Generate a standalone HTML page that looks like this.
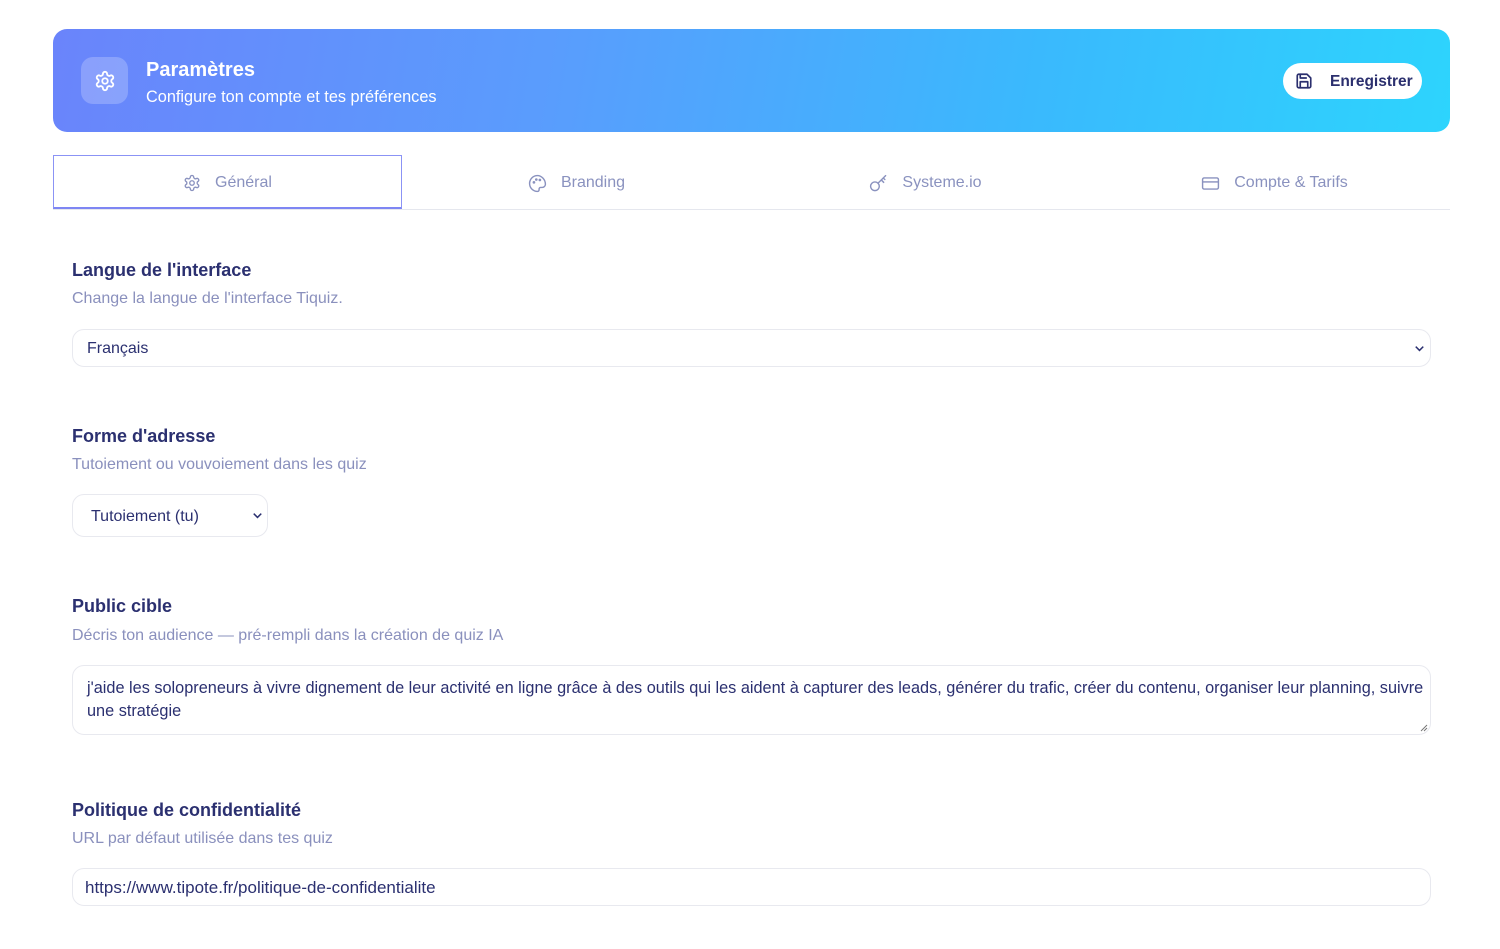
<!DOCTYPE html>
<html><head><meta charset="utf-8">
<style>
*{box-sizing:border-box;margin:0;padding:0}
body{width:1500px;height:949px;background:#fff;font-family:"Liberation Sans",sans-serif;position:relative;overflow:hidden;color:#2b3070}
.hdr{position:absolute;left:53px;top:29px;width:1397px;height:103px;border-radius:14px;background:linear-gradient(100deg,#6a84fb 0%,#5a9cfd 35%,#3ab9fd 70%,#2dd4fd 100%)}
.ic{position:absolute;left:28px;top:28px;width:47px;height:47px;border-radius:12px;background:rgba(255,255,255,.22);display:flex;align-items:center;justify-content:center}
.t1{position:absolute;left:93px;top:30px;color:#fff;font-weight:bold;font-size:20px}
.t2{position:absolute;left:93px;top:59px;color:#fff;font-size:16.3px}
.btn{position:absolute;left:1230px;top:34px;width:139px;height:36px;border-radius:18px;background:#fff;color:#2b2f6e;font-size:15.5px;font-weight:bold}
.btn svg{position:absolute;left:12px;top:9px}
.btn span{position:absolute;left:47px;top:10px}
.tabs{position:absolute;left:53px;top:155px;width:1397px;height:55px;border-bottom:1px solid #e5e7ee}
.tab{position:absolute;top:0;width:349px;height:54px;display:flex;align-items:center;justify-content:center;gap:14px;color:#8a92bf;font-size:16px;padding-top:2px}
.tab.a{border:1px solid #8b93f5;border-bottom:2px solid #7e86f3;height:54px}
.lbl{position:absolute;left:72px;font-size:18px;font-weight:bold;color:#2b3070}
.sub{position:absolute;left:72px;font-size:16px;color:#8a90bd}
.box{position:absolute;left:72px;width:1359px;border:1px solid #e8e9ef;border-radius:12px;font-size:16px;color:#2b3070}
</style></head><body>
<div class="hdr">
 <div class="ic"><svg width="22" height="22" viewBox="0 0 24 24" fill="none" stroke="#fff" stroke-width="2" stroke-linecap="round" stroke-linejoin="round"><path d="M12.22 2h-.44a2 2 0 0 0-2 2v.18a2 2 0 0 1-1 1.73l-.43.25a2 2 0 0 1-2 0l-.15-.08a2 2 0 0 0-2.73.73l-.22.38a2 2 0 0 0 .73 2.73l.15.1a2 2 0 0 1 1 1.72v.51a2 2 0 0 1-1 1.74l-.15.09a2 2 0 0 0-.73 2.73l.22.38a2 2 0 0 0 2.730.73l.15-.08a2 2 0 0 1 2 0l.43.25a2 2 0 0 1 1 1.73V20a2 2 0 0 0 2 2h.44a2 2 0 0 0 2-2v-.18a2 2 0 0 1 1-1.73l.43-.25a2 2 0 0 1 2 0l.15.08a2 2 0 0 0 2.73-.73l.22-.39a2 2 0 0 0-.73-2.73l-.15-.08a2 2 0 0 1-1-1.74v-.5a2 2 0 0 1 1-1.74l.15-.09a2 2 0 0 0 .73-2.73l-.22-.38a2 2 0 0 0-2.73-.73l-.15.08a2 2 0 0 1-2 0l-.43-.25a2 2 0 0 1-1-1.73V4a2 2 0 0 0-2-2z"/><circle cx="12" cy="12" r="3"/></svg></div>
 <div class="t1">Paramètres</div>
 <div class="t2">Configure ton compte et tes préférences</div>
 <div class="btn"><svg width="18" height="18" viewBox="0 0 24 24" fill="none" stroke="#2b2f6e" stroke-width="2.2" stroke-linecap="round" stroke-linejoin="round"><path d="M19 21H5a2 2 0 0 1-2-2V5a2 2 0 0 1 2-2h11l5 5v11a2 2 0 0 1-2 2z"/><path d="M17 21v-8H7v8"/><path d="M7 3v5h8"/></svg><span>Enregistrer</span></div>
</div>
<div class="tabs">
 <div class="tab a" style="left:0"><svg width="18" height="18" viewBox="0 0 24 24" fill="none" stroke="#8a92bf" stroke-width="1.8"><path d="M12.22 2h-.44a2 2 0 0 0-2 2v.18a2 2 0 0 1-1 1.73l-.43.25a2 2 0 0 1-2 0l-.15-.08a2 2 0 0 0-2.73.73l-.22.38a2 2 0 0 0 .73 2.73l.15.1a2 2 0 0 1 1 1.72v.51a2 2 0 0 1-1 1.74l-.15.09a2 2 0 0 0-.73 2.73l.22.38a2 2 0 0 0 2.73.73l.15-.08a2 2 0 0 1 2 0l.43.25a2 2 0 0 1 1 1.73V20a2 2 0 0 0 2 2h.44a2 2 0 0 0 2-2v-.18a2 2 0 0 1 1-1.73l.43-.25a2 2 0 0 1 2 0l.15.08a2 2 0 0 0 2.73-.73l.22-.39a2 2 0 0 0-.73-2.73l-.15-.08a2 2 0 0 1-1-1.74v-.5a2 2 0 0 1 1-1.74l.15-.09a2 2 0 0 0 .73-2.73l-.22-.38a2 2 0 0 0-2.73-.73l-.15.08a2 2 0 0 1-2 0l-.43-.25a2 2 0 0 1-1-1.73V4a2 2 0 0 0-2-2z"/><circle cx="12" cy="12" r="3"/></svg>Général</div>
 <div class="tab" style="left:349px"><svg width="19" height="19" viewBox="0 0 24 24" fill="none" stroke="#8a92bf" stroke-width="1.8"><path d="M12 2a10 10 0 0 0 0 20 2 2 0 0 0 2-2v-1a2 2 0 0 1 2-2h2a4 4 0 0 0 4-4c0-6-5-11-10-11z"/><circle cx="7.5" cy="10.5" r=".8" fill="#8a92bf"/><circle cx="10.5" cy="7" r=".8" fill="#8a92bf"/><circle cx="15" cy="7.5" r=".8" fill="#8a92bf"/></svg>Branding</div>
 <div class="tab" style="left:698px"><svg width="19" height="19" viewBox="0 0 24 24" fill="none" stroke="#8a92bf" stroke-width="1.8" stroke-linecap="round"><circle cx="7.5" cy="15.5" r="5.5"/><path d="M11.5 11.5 21 2M15.5 7.5l3 3M18 5l2 2"/></svg>Systeme.io</div>
 <div class="tab" style="left:1047px"><svg width="19" height="19" viewBox="0 0 24 24" fill="none" stroke="#8a92bf" stroke-width="1.8"><rect x="2" y="5" width="20" height="14" rx="2"/><path d="M2 10h20"/></svg>Compte &amp; Tarifs</div>
</div>

<div class="lbl" style="top:260px">Langue de l'interface</div>
<div class="sub" style="top:290px">Change la langue de l'interface Tiquiz.</div>
<div class="box" style="top:329px;height:38px"><span style="position:absolute;left:14px;top:10px">Français</span><svg style="position:absolute;right:3px;top:11px" width="15" height="15" viewBox="0 0 24 24" fill="none" stroke="#2b3070" stroke-width="2.5"><path d="m6 9 6 6 6-6"/></svg></div>

<div class="lbl" style="top:426px">Forme d'adresse</div>
<div class="sub" style="top:456px">Tutoiement ou vouvoiement dans les quiz</div>
<div class="box" style="top:494px;width:196px;height:43px"><span style="position:absolute;left:18px;top:13px">Tutoiement (tu)</span><svg style="position:absolute;right:2px;top:13px" width="15" height="15" viewBox="0 0 24 24" fill="none" stroke="#2b3070" stroke-width="2.5"><path d="m6 9 6 6 6-6"/></svg></div>

<div class="lbl" style="top:596px">Public cible</div>
<div class="sub" style="top:627px">Décris ton audience — pré-rempli dans la création de quiz IA</div>
<div class="box" style="top:665px;height:70px;padding:11px 14px;line-height:23px;font-size:16.3px;white-space:nowrap;overflow:hidden">j'aide les solopreneurs à vivre dignement de leur activité en ligne grâce à des outils qui les aident à capturer des leads, générer du trafic, créer du contenu, organiser leur planning, suivre<br>une stratégie<svg style="position:absolute;right:2px;bottom:2px" width="8" height="8" viewBox="0 0 8 8" stroke="#777" stroke-width="1"><path d="M7 1 1 7M7 4 4 7"/></svg></div>

<div class="lbl" style="top:800px">Politique de confidentialité</div>
<div class="sub" style="top:830px">URL par défaut utilisée dans tes quiz</div>
<div class="box" style="top:868px;height:38px"><span style="position:absolute;left:12px;top:9px;font-size:17px">https://www.tipote.fr/politique-de-confidentialite</span></div>
</body></html>
